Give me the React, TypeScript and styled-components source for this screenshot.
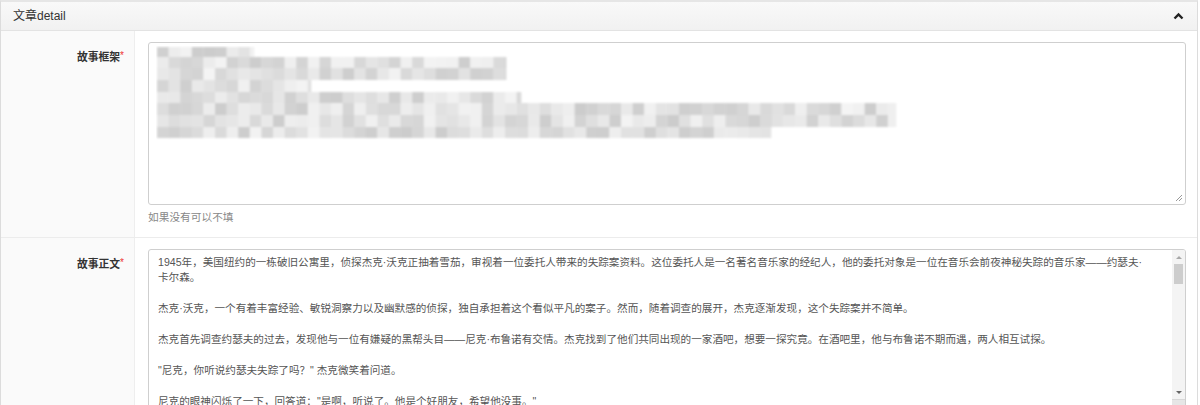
import React, { useMemo } from 'react'
import styled, { createGlobalStyle } from 'styled-components'

const GlobalStyle = createGlobalStyle`
  html, body {
    margin: 0;
    padding: 0;
    overflow: hidden;
    background: #fff;
  }
  body {
    font-family: "Liberation Sans", "Noto Sans CJK SC", sans-serif;
    color: #333;
  }
`

const storyText = `1945年，美国纽约的一栋破旧公寓里，侦探杰克·沃克正抽着雪茄，审视着一位委托人带来的失踪案资料。这位委托人是一名著名音乐家的经纪人，他的委托对象是一位在音乐会前夜神秘失踪的音乐家——约瑟夫·
卡尔森。

杰克·沃克，一个有着丰富经验、敏锐洞察力以及幽默感的侦探，独自承担着这个看似平凡的案子。然而，随着调查的展开，杰克逐渐发现，这个失踪案并不简单。

杰克首先调查约瑟夫的过去，发现他与一位有嫌疑的黑帮头目——尼克·布鲁诺有交情。杰克找到了他们共同出现的一家酒吧，想要一探究竟。在酒吧里，他与布鲁诺不期而遇，两人相互试探。

"尼克，你听说约瑟夫失踪了吗？" 杰克微笑着问道。

尼克的眼神闪烁了一下，回答道："是啊，听说了。他是个好朋友，希望他没事。"`

// pixelated (redacted) rows: y offset, height, width
const mosaicRows = [
  { y: 0, h: 10, w: 97 },
  { y: 10, h: 11, w: 349 },
  { y: 21, h: 12, w: 349 },
  { y: 33, h: 12, w: 154 },
  { y: 45, h: 11, w: 364 },
  { y: 56, h: 12, w: 739 },
  { y: 68, h: 12, w: 739 },
  { y: 80, h: 11, w: 614 },
]

function Mosaic () {
  const cells = useMemo(() => {
    let seed = 12345
    const rnd = () => {
      seed = (seed * 16807) % 2147483647
      return seed / 2147483647
    }
    const out: { x: number; y: number; w: number; h: number; c: string }[] = []
    mosaicRows.forEach(row => {
      for (let x = 0; x < row.w; x += 11.6) {
        const v = Math.round(204 + rnd() * 40)
        out.push({ x, y: row.y, w: Math.min(11.6, row.w - x), h: row.h, c: `rgb(${v},${v},${v})` })
      }
    })
    return out
  }, [])

  return (
    <MosaicSvg width="750" height="94" viewBox="0 0 750 94">
      <defs>
        <filter id="soft" x="-2%" y="-5%" width="104%" height="110%">
          <feGaussianBlur stdDeviation="1.1" />
        </filter>
      </defs>
      <g filter="url(#soft)" transform="translate(1 1)">
        {cells.map((c, i) => (
          <rect key={i} x={c.x} y={c.y} width={c.w + 0.3} height={c.h} fill={c.c} />
        ))}
      </g>
    </MosaicSvg>
  )
}

function ResizeGrip () {
  return (
    <GripSvg width="8" height="8" viewBox="0 0 8 8">
      <line x1="1" y1="7" x2="7" y2="1" stroke="#999" strokeWidth="1" />
      <line x1="4" y1="7" x2="7" y2="4" stroke="#999" strokeWidth="1" />
    </GripSvg>
  )
}

function App () {
  return (
    <>
      <GlobalStyle />
      <Panel>
        <PanelHeader>
          <PanelTitle>文章detail</PanelTitle>
          <svg width="11" height="8" viewBox="0 0 11 8">
            <polyline points="1.5,6.5 5.5,2.5 9.5,6.5" fill="none" stroke="#222" strokeWidth="2.4" />
          </svg>
        </PanelHeader>

        <FormRow>
          <Label>故事框架<Required>*</Required></Label>
          <Field>
            <TextBox $height={163}>
              <Mosaic />
              <ResizeGrip />
            </TextBox>
            <HelpText>如果没有可以不填</HelpText>
          </Field>
        </FormRow>

        <FormRow>
          <Label>故事正文<Required>*</Required></Label>
          <Field>
            <TextBox $height={166} $scroll>
              <StoryText>{storyText}</StoryText>
              <ScrollBar>
                <ScrollArrow><Triangle $up /></ScrollArrow>
                <ScrollThumb />
                <ScrollTrack />
                <ScrollArrow><Triangle /></ScrollArrow>
                <ScrollCorner />
              </ScrollBar>
            </TextBox>
          </Field>
        </FormRow>
      </Panel>
    </>
  )
}

const Panel = styled.div`
  margin-right: 2px;
  border: 1px solid #dcdcdc;
  border-top: 2px solid #e6e6e6;
  background: #fff;
`

const PanelHeader = styled.div`
  height: 28px;
  display: flex;
  align-items: center;
  justify-content: space-between;
  padding: 0 13px 0 12px;
  background: linear-gradient(#f9f9f9, #f1f1f1);
  border-bottom: 1px solid #e3e3e3;
`

const PanelTitle = styled.div`
  font-size: 12px;
  color: #333;
  line-height: 16px;
`

const FormRow = styled.div`
  display: grid;
  grid-template-columns: 134px 1fr;
  border-bottom: 1px solid #ececec;
`

const Label = styled.div`
  background: #fafafa;
  border-right: 1px solid #eeeeee;
  text-align: right;
  padding: 17px 10px 0 0;
  font-size: 10.8px;
  line-height: 15px;
  font-weight: bold;
  color: #333;
`

const Required = styled.span`
  color: #e33;
  font-weight: normal;
  font-size: 10px;
  vertical-align: 2px;
`

const Field = styled.div`
  padding: 11px 11px 12px 13px;
`

const TextBox = styled.div<{ $height: number; $scroll?: boolean }>`
  position: relative;
  box-sizing: border-box;
  height: ${p => p.$height}px;
  border: 1px solid #cfcfcf;
  border-radius: 3px;
  background: #fff;
  display: flex;
  padding: ${p => (p.$scroll ? '0' : '3px 7px')};
  overflow: hidden;
`

const MosaicSvg = styled.svg`
  display: block;
  flex: none;
`

const GripSvg = styled.svg`
  position: absolute;
  right: 2px;
  bottom: 2px;
`

const HelpText = styled.div`
  margin-top: 5px;
  font-size: 10.7px;
  line-height: 15px;
  color: #888;
`

const StoryText = styled.div`
  flex: 1;
  padding: 5px 9px;
  white-space: pre;
  overflow: hidden;
  font-size: 10.6px;
  line-height: 15.4px;
  color: #555;
`

const ScrollBar = styled.div`
  width: 13px;
  flex: none;
  display: flex;
  flex-direction: column;
  background: #f4f4f4;
`

const ScrollArrow = styled.div`
  height: 14px;
  display: flex;
  align-items: center;
  justify-content: center;
`

const Triangle = styled.div<{ $up?: boolean }>`
  width: 0;
  height: 0;
  border-left: 3px solid transparent;
  border-right: 3px solid transparent;
  ${p => (p.$up ? 'border-bottom: 3px solid #a8a8a8;' : 'border-top: 3px solid #666;')}
`

const ScrollThumb = styled.div`
  height: 20px;
  margin: 0 2px;
  background: #cdcdcd;
`

const ScrollTrack = styled.div`
  flex: 1;
`

const ScrollCorner = styled.div`
  height: 14px;
  border-top: 1px solid #d8d8d8;
  background: #e6e6e6;
`

export default App
